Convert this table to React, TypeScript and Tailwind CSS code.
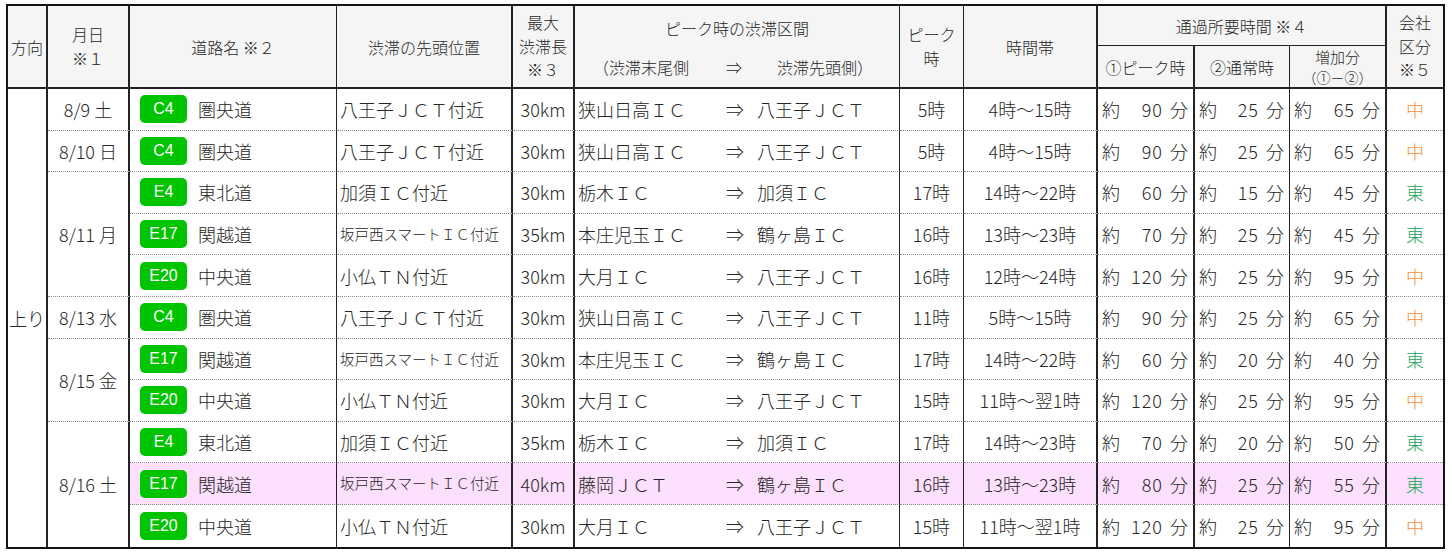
import React from 'react';

type Row = {
  date?: string;
  span?: number;
  code: string;
  road: string;
  head: string;
  small?: boolean;
  len: string;
  from: string;
  to: string;
  peak: string;
  band: string;
  a: string;
  b: string;
  c: string;
  co: '中' | '東';
  hl?: boolean;
};

const rows: Row[] = [
  { date: '8/9 土', span: 1, code: 'C4', road: '圏央道', head: '八王子ＪＣＴ付近', len: '30km', from: '狭山日高ＩＣ', to: '八王子ＪＣＴ', peak: '5時', band: '4時～15時', a: '90', b: '25', c: '65', co: '中' },
  { date: '8/10 日', span: 1, code: 'C4', road: '圏央道', head: '八王子ＪＣＴ付近', len: '30km', from: '狭山日高ＩＣ', to: '八王子ＪＣＴ', peak: '5時', band: '4時～15時', a: '90', b: '25', c: '65', co: '中' },
  { date: '8/11 月', span: 3, code: 'E4', road: '東北道', head: '加須ＩＣ付近', len: '30km', from: '栃木ＩＣ', to: '加須ＩＣ', peak: '17時', band: '14時～22時', a: '60', b: '15', c: '45', co: '東' },
  { code: 'E17', road: '関越道', head: '坂戸西スマートＩＣ付近', small: true, len: '35km', from: '本庄児玉ＩＣ', to: '鶴ヶ島ＩＣ', peak: '16時', band: '13時～23時', a: '70', b: '25', c: '45', co: '東' },
  { code: 'E20', road: '中央道', head: '小仏ＴＮ付近', len: '30km', from: '大月ＩＣ', to: '八王子ＪＣＴ', peak: '16時', band: '12時～24時', a: '120', b: '25', c: '95', co: '中' },
  { date: '8/13 水', span: 1, code: 'C4', road: '圏央道', head: '八王子ＪＣＴ付近', len: '30km', from: '狭山日高ＩＣ', to: '八王子ＪＣＴ', peak: '11時', band: '5時～15時', a: '90', b: '25', c: '65', co: '中' },
  { date: '8/15 金', span: 2, code: 'E17', road: '関越道', head: '坂戸西スマートＩＣ付近', small: true, len: '30km', from: '本庄児玉ＩＣ', to: '鶴ヶ島ＩＣ', peak: '17時', band: '14時～22時', a: '60', b: '20', c: '40', co: '東' },
  { code: 'E20', road: '中央道', head: '小仏ＴＮ付近', len: '30km', from: '大月ＩＣ', to: '八王子ＪＣＴ', peak: '15時', band: '11時～翌1時', a: '120', b: '25', c: '95', co: '中' },
  { date: '8/16 土', span: 3, code: 'E4', road: '東北道', head: '加須ＩＣ付近', len: '35km', from: '栃木ＩＣ', to: '加須ＩＣ', peak: '17時', band: '14時～23時', a: '70', b: '20', c: '50', co: '東' },
  { code: 'E17', road: '関越道', head: '坂戸西スマートＩＣ付近', small: true, len: '40km', from: '藤岡ＪＣＴ', to: '鶴ヶ島ＩＣ', peak: '16時', band: '13時～23時', a: '80', b: '25', c: '55', co: '東', hl: true },
  { code: 'E20', road: '中央道', head: '小仏ＴＮ付近', len: '30km', from: '大月ＩＣ', to: '八王子ＪＣＴ', peak: '15時', band: '11時～翌1時', a: '120', b: '25', c: '95', co: '中' },
];

const DOT = 'border-b [border-bottom-style:dotted] border-b-[#8a8a8a]';

function Mins({ v }: { v: string }) {
  return (
    <div className="flex items-center justify-between pl-[4px] pr-[5px]">
      <span>約</span>
      <span className="flex items-center gap-[7px]">
        <span className="tracking-[1px]">{v}</span>
        <span>分</span>
      </span>
    </div>
  );
}

export default function App() {
  const groupEnd = (i: number) => {
    let start = i;
    while (!rows[start].date) start--;
    return start + (rows[start].span || 1) - 1;
  };
  return (
    <div className="w-[1452px] h-[557px] bg-white pt-[4px] pl-[6px] font-['Noto_Sans_CJK_JP','Noto_Sans',sans-serif] font-light text-[#262626]">
      <table className="table-fixed border-separate border-spacing-0 border-2 border-[#151515] w-[1439px]">
        <colgroup>
          <col className="w-[40px]" />
          <col className="w-[82px]" />
          <col className="w-[207px]" />
          <col className="w-[176px]" />
          <col className="w-[62px]" />
          <col className="w-[325px]" />
          <col className="w-[64px]" />
          <col className="w-[134px]" />
          <col className="w-[97px]" />
          <col className="w-[95px]" />
          <col className="w-[97px]" />
          <col className="w-[56px]" />
        </colgroup>
        <thead className="bg-[#f5f5f5] text-[16px]">
          <tr className="h-[40px]">
            <th rowSpan={2} className="font-light p-0 leading-[22px] text-center border-r-2 border-b-2 border-[#222]">方向</th>
            <th rowSpan={2} className="font-light p-0 leading-[23.5px] text-center border-r-2 border-b-2 border-[#222]">月日<br />※１</th>
            <th rowSpan={2} className="font-light p-0 leading-[22px] text-center border-r border-b-2 border-[#222]">道路名 ※２</th>
            <th rowSpan={2} className="font-light p-0 leading-[22px] text-center border-r-2 border-b-2 border-[#222]">渋滞の先頭位置</th>
            <th rowSpan={2} className="font-light p-0 leading-[23.5px] text-center border-r-2 border-b-2 border-[#222]">最大<br />渋滞長<br />※３</th>
            <th rowSpan={2} className="font-light p-0 border-r border-b-2 border-[#222]">
              <div className="flex h-[79px] flex-col justify-between pt-[10px] pb-[8px] leading-[22px]">
                <div className="text-center">ピーク時の渋滞区間</div>
                <div className="flex pl-[18px] text-left">
                  <span className="w-[133px]">（渋滞末尾側</span>
                  <span className="w-[51px]">⇒</span>
                  <span>渋滞先頭側）</span>
                </div>
              </div>
            </th>
            <th rowSpan={2} className="font-light p-0 leading-[23.5px] text-center border-r border-b-2 border-[#222]">ピーク<br />時</th>
            <th rowSpan={2} className="font-light p-0 leading-[22px] text-center border-r-2 border-b-2 border-[#222]">時間帯</th>
            <th colSpan={3} className="font-light p-0 leading-[22px] text-center border-r-2 border-b border-[#222]">通過所要時間 ※４</th>
            <th rowSpan={2} className="font-light p-0 leading-[23.5px] text-center border-b-2 border-[#222]">会社<br />区分<br />※５</th>
          </tr>
          <tr className="h-[41px]">
            <th className="font-light p-0 leading-[22px] text-center border-r-2 border-b-2 border-[#222]">①ピーク時</th>
            <th className="font-light p-0 leading-[22px] text-center border-r border-b-2 border-[#222]">②通常時</th>
            <th className="font-light p-0 text-center border-r-2 border-b-2 border-[#222] align-middle">
              <div className="leading-[21px] text-[15px]">増加分</div>
              <div className="leading-[20px] text-[14px]">（①－②）</div>
            </th>
          </tr>
        </thead>
        <tbody className="text-[18px] leading-none">
          {rows.map((r, i) => {
            const last = i === rows.length - 1;
            const bb = last ? '' : DOT;
            const bg = r.hl ? 'bg-[#fde0fd]' : 'bg-white';
            const dateLast = r.date ? groupEnd(i) === rows.length - 1 : false;
            return (
              <tr key={i} className="h-[41.6px]">
                {i === 0 && (
                  <td rowSpan={rows.length} className="p-0 text-center align-middle border-r-2 border-[#222] bg-white">上り</td>
                )}
                {r.date && (
                  <td rowSpan={r.span} className={`p-0 text-center align-middle border-r-2 border-[#222] bg-white ${dateLast ? '' : DOT}`}>
                    {r.date}
                  </td>
                )}
                <td className={`p-0 border-r border-[#222] ${bb} ${bg}`}>
                  <div className="flex items-center pl-[10px]">
                    <span className="flex h-[28px] w-[47px] items-center justify-center rounded-[5px] bg-[#00c400] font-['Liberation_Sans',Arial,sans-serif] font-normal text-[16px] text-white">
                      {r.code}
                    </span>
                    <span className="ml-[11px]">{r.road}</span>
                  </div>
                </td>
                <td className={`p-0 pl-[3px] border-r-2 border-[#222] ${bb} ${bg} ${r.small ? 'text-[14.5px]' : ''}`}>{r.head}</td>
                <td className={`p-0 text-center border-r-2 border-[#222] ${bb} ${bg}`}>{r.len}</td>
                <td className={`p-0 pl-[3px] border-r border-[#222] ${bb} ${bg}`}>
                  <div className="flex items-center">
                    <span className="w-[148px]">{r.from}</span>
                    <span className="w-[31px]">⇒</span>
                    <span>{r.to}</span>
                  </div>
                </td>
                <td className={`p-0 text-center border-r border-[#222] ${bb} ${bg}`}>{r.peak}</td>
                <td className={`p-0 text-center border-r-2 border-[#222] ${bb} ${bg}`}>{r.band}</td>
                <td className={`p-0 border-r-2 border-[#222] ${bb} ${bg}`}><Mins v={r.a} /></td>
                <td className={`p-0 border-r border-[#222] ${bb} ${bg}`}><Mins v={r.b} /></td>
                <td className={`p-0 border-r-2 border-[#222] ${bb} ${bg}`}><Mins v={r.c} /></td>
                <td className={`p-0 text-center ${bb} ${bg} ${r.co === '中' ? 'text-[#f7913c]' : 'text-[#22a557]'}`}>{r.co}</td>
              </tr>
            );
          })}
        </tbody>
      </table>
    </div>
  );
}
